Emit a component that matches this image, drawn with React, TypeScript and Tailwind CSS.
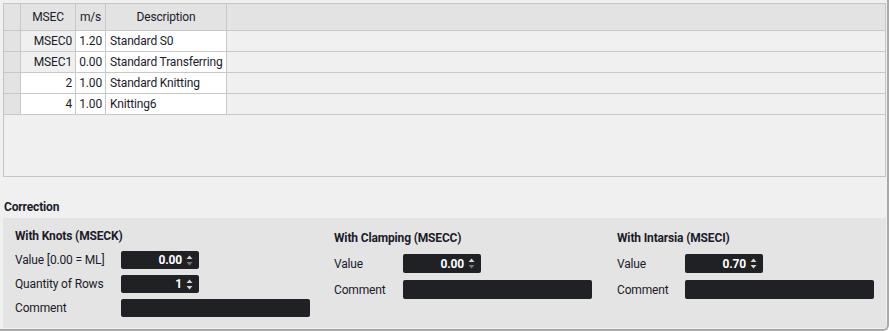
import React from "react";

type Row = { msec: string; ms: string; desc: string; readOnly?: boolean };

const rows: Row[] = [
  { msec: "MSEC0", ms: "1.20", desc: "Standard S0", readOnly: true },
  { msec: "MSEC1", ms: "0.00", desc: "Standard Transferring", readOnly: true },
  { msec: "2", ms: "1.00", desc: "Standard Knitting" },
  { msec: "4", ms: "1.00", desc: "Knitting6" },
];

const cols = "grid grid-cols-[17px_55px_30px_121px_1fr]";

const Spin = ({ downOff }: { downOff?: boolean }) => (
  <svg width="7" height="11" viewBox="0 0 7 11">
    <path d="M0.5 4 L3.5 0.5 L6.5 4 Z" fill="#d6d6d6" />
    <path d="M0.5 7 L3.5 10.5 L6.5 7 Z" fill={downOff ? "#77787a" : "#d6d6d6"} />
  </svg>
);

const NumBox = ({ value, h, downOff }: { value: string; h: string; downOff?: boolean }) => (
  <div className={`flex ${h} w-[78px] items-center justify-end gap-[4px] rounded-[2px] bg-[#202124] pr-[6px] font-bold text-white`}>
    <span>{value}</span>
    <Spin downOff={downOff} />
  </div>
);

const TextBox = ({ h }: { h: string }) => <div className={`${h} w-[189px] rounded-[2px] bg-[#202124]`} />;

const App: React.FC = () => {
  return (
    <div className="h-[331px] w-[889px] overflow-hidden rounded-br-[6px] border-r-2 border-b-2 border-[#a9a9a9] bg-[#f0f0f0] pt-[3px] pl-[3px] font-['Roboto',sans-serif] text-[12px] leading-[16px] tracking-[-0.15px] text-[#1b1b2b]">
      {/* grid */}
      <div className="h-[174px] w-[883px] border border-[#c4c4c4]">
        <div className={`${cols} h-[27px] border-b border-[#c8c8c8] bg-[#e3e3e3]`}>
          <div className="border-r border-[#c8c8c8]" />
          <div className="flex items-center justify-center border-r border-[#c8c8c8]">MSEC</div>
          <div className="flex items-center justify-center border-r border-[#c8c8c8]">m/s</div>
          <div className="flex items-center justify-center border-r border-[#c8c8c8]">Description</div>
          <div />
        </div>
        {rows.map((r) => (
          <div key={r.msec} className={`${cols} h-[21px] border-b border-[#c8c8c8]`}>
            <div className="border-r border-[#c8c8c8] bg-[#e3e3e3]" />
            <div className={`flex items-center justify-end border-r border-[#c8c8c8] pr-[3px] ${r.readOnly ? "bg-[#f0f0f0]" : "bg-white"}`}>
              {r.msec}
            </div>
            <div className="flex items-center justify-end border-r border-[#c8c8c8] bg-white pr-[3px]">{r.ms}</div>
            <div className="flex items-center overflow-hidden border-r border-[#c8c8c8] bg-white pl-[4px] whitespace-nowrap">{r.desc}</div>
            <div />
          </div>
        ))}
      </div>

      <div className="mt-[22px] pl-[1px] font-bold">Correction</div>

      {/* correction panel */}
      <div className="mt-[3px] grid h-[110px] w-[883px] grid-cols-[319px_283px_1fr] bg-[#e4e4e4] pl-[12px]">
        <div className="pt-[10px]">
          <div className="font-bold">With Knots (MSECK)</div>
          <div className="mt-[7px] flex flex-col gap-[6px]">
            <div className="flex items-center">
              <span className="w-[106px] whitespace-nowrap">Value [0.00 = ML]</span>
              <NumBox value="0.00" h="h-[18px]" downOff />
            </div>
            <div className="flex items-center">
              <span className="w-[106px] whitespace-nowrap">Quantity of Rows</span>
              <NumBox value="1" h="h-[18px]" />
            </div>
            <div className="flex items-center">
              <span className="w-[106px]">Comment</span>
              <TextBox h="h-[18px]" />
            </div>
          </div>
        </div>

        <div className="pt-[12px]">
          <div className="font-bold">With Clamping (MSECC)</div>
          <div className="mt-[8px] flex flex-col gap-[7px]">
            <div className="flex items-center">
              <span className="w-[69px]">Value</span>
              <NumBox value="0.00" h="h-[19px]" downOff />
            </div>
            <div className="flex items-center">
              <span className="w-[69px]">Comment</span>
              <TextBox h="h-[19px]" />
            </div>
          </div>
        </div>

        <div className="pt-[12px]">
          <div className="font-bold">With Intarsia (MSECI)</div>
          <div className="mt-[8px] flex flex-col gap-[7px]">
            <div className="flex items-center">
              <span className="w-[68px]">Value</span>
              <NumBox value="0.70" h="h-[19px]" />
            </div>
            <div className="flex items-center">
              <span className="w-[68px]">Comment</span>
              <TextBox h="h-[19px]" />
            </div>
          </div>
        </div>
      </div>
    </div>
  );
};

export default App;
